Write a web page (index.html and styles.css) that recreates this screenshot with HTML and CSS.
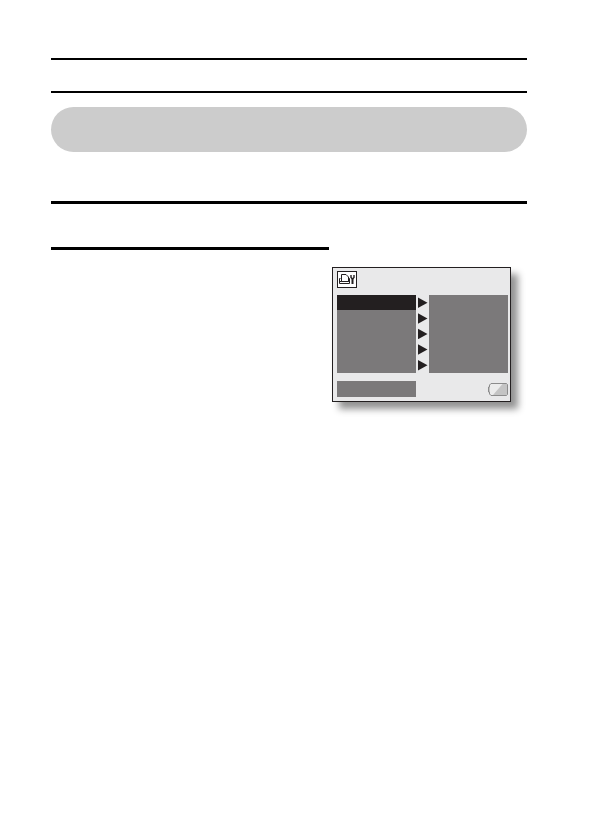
FILE: index.html
```
<!DOCTYPE html>
<html lang="en">
    <head>
        <meta charset="utf-8">
        <title>Printer settings</title>
        <link rel="stylesheet" href="styles.css">
    </head>

    <body>
        <header class="chapter"></header>
        <div class="banner"></div>
        <main class="section">
            <div class="subsection"></div>
            <div class="screen">
                <svg class="print-icon" width="20" height="17" viewBox="0 0 20 17">
                    <rect x="0.5" y="0.5" width="19" height="16" fill="#fff" stroke="#231f20"/>
                    <path d="M3.5 7.5H2.5V12.5H12.5V7.5H11.5" fill="#fff" stroke="#231f20"/>
                    <path d="M2.5 10.5H12.5" stroke="#231f20"/>
                    <path d="M4.5 3.5H9L11.5 6V10.5H4.5Z" fill="#fff" stroke="#231f20"/>
                    <path d="M14 4V6.5L15.5 8L17 6.5V4" fill="none" stroke="#231f20" stroke-width="1.4"/>
                    <path d="M15.5 7V13" stroke="#231f20" stroke-width="2"/>
                </svg>
                <div class="menu">
                    <div class="items">
                        <div class="selected"></div>
                    </div>
                    <div class="arrows">
                        <span class="arrow"></span>
                        <span class="arrow"></span>
                        <span class="arrow"></span>
                        <span class="arrow"></span>
                        <span class="arrow"></span>
                    </div>
                    <div class="items"></div>
                </div>
                <div class="status">
                    <div class="guide"></div>
                    <svg class="battery" width="20" height="13" viewBox="0 0 20 13">
                        <path d="M3 0.5H18.5L19.5 1.5V11.5L18.5 12.5H3L1.5 11V9H0.5V4H1.5V2Z" fill="#c4c4c4"/>
                        <path d="M3 1H14.5L5 12H3L2 11V2Z" fill="#ececec"/>
                        <path d="M3 0.5H18.5L19.5 1.5V11.5L18.5 12.5H3L1.5 11V9H0.5V4H1.5V2Z" fill="none" stroke="#8c8c8c"/>
                    </svg>
                </div>
            </div>
        </main>
    </body>
</html>
```

FILE: styles.css
```
body {
    box-sizing: border-box;
    min-height: 100vh;
    margin: 0;
    padding: 58px 69px 0 51px;
    background: #fff;
    font-family: "Liberation Sans", Arial, sans-serif;
}
.chapter {
    height: 31px;
    border-top: 2px solid #000;
    border-bottom: 2px solid #000;
}
.banner {
    height: 45px;
    margin-top: 14px;
    border-radius: 23px;
    background: #ccc;
}
.section {
    display: flex;
    align-items: flex-start;
    gap: 3px;
    margin-top: 49px;
    padding-right: 16px;
    border-top: 3px solid #000;
}
.subsection {
    flex: 1;
    margin-top: 43px;
    border-top: 3px solid #000;
}
/* camera display */
.screen {
    box-sizing: border-box;
    width: 179px;
    margin-top: 63px;
    padding: 3px 2px 4px 4px;
    border: 1px solid #231f20;
    background: #e9e9ea;
    box-shadow: 7px 7px 7px #939393;
}
.print-icon,
.battery {
    display: block;
}
.menu {
    display: grid;
    grid-template-columns: 1fr 13px 1fr;
    height: 78px;
    margin-top: 7px;
}
.items,
.guide {
    background: #7b797a;
}
.selected {
    height: 15px;
    background: #231f20;
}
.arrows {
    display: grid;
    grid-template-rows: repeat(5, 1fr);
    align-items: center;
    justify-items: center;
}
.arrow {
    width: 10px;
    height: 11px;
    background: #231f20;
    clip-path: polygon(0 0, 100% 50%, 0 100%);
}
.status {
    display: flex;
    align-items: center;
    justify-content: space-between;
    margin-top: 8px;
}
.guide {
    width: 79px;
    height: 16px;
}
```
